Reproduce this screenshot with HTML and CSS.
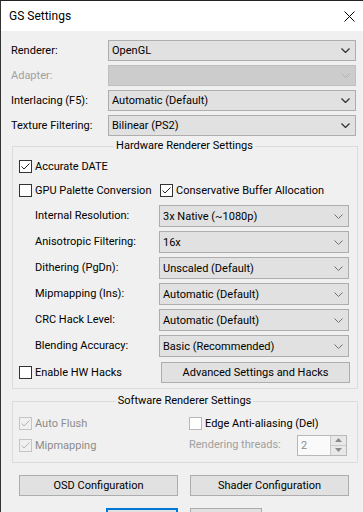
FILE: index.html
```html
<!DOCTYPE html>
<html lang="en">
<head>
    <meta charset="UTF-8">
    <title>GS Settings</title>
    <link rel="stylesheet" href="styles.css">
</head>
<body>
    <div class="window">
        <div class="titlebar">
            <span class="title">GS Settings</span>
            <svg class="close" width="11" height="11" viewBox="0 0 11 11">
                <path d="M0.5 0.5 L10.5 10.5 M10.5 0.5 L0.5 10.5" stroke="#000" stroke-width="1" fill="none"/>
            </svg>
        </div>

        <div class="dialog">
            <!-- Top settings -->
            <div class="form-top">
                <span class="label">Renderer:</span>
                <div class="combo dark"><span>OpenGL</span><svg class="chev" width="9" height="5" viewBox="0 0 9 5"><path d="M0.5 0.5 L4.5 4.5 L8.5 0.5" /></svg></div>

                <span class="label disabled">Adapter:</span>
                <div class="combo off"><span></span><svg class="chev" width="9" height="5" viewBox="0 0 9 5"><path d="M0.5 0.5 L4.5 4.5 L8.5 0.5" /></svg></div>

                <span class="label">Interlacing (F5):</span>
                <div class="combo dark"><span>Automatic (Default)</span><svg class="chev" width="9" height="5" viewBox="0 0 9 5"><path d="M0.5 0.5 L4.5 4.5 L8.5 0.5" /></svg></div>

                <span class="label">Texture Filtering:</span>
                <div class="combo dark"><span>Bilinear (PS2)</span><svg class="chev" width="9" height="5" viewBox="0 0 9 5"><path d="M0.5 0.5 L4.5 4.5 L8.5 0.5" /></svg></div>
            </div>

            <!-- Hardware renderer -->
            <fieldset class="group hw">
                <legend>Hardware Renderer Settings</legend>

                <div class="check-row">
                    <label class="check"><span class="box"><svg width="11" height="11" viewBox="0 0 11 11"><path d="M1.5 5.5 L4 8 L9.5 2.5" /></svg></span>Accurate DATE</label>
                </div>

                <div class="check-row two">
                    <label class="check"><span class="box"></span>GPU Palette Conversion</label>
                    <label class="check"><span class="box"><svg width="11" height="11" viewBox="0 0 11 11"><path d="M1.5 5.5 L4 8 L9.5 2.5" /></svg></span>Conservative Buffer Allocation</label>
                </div>

                <div class="hw-rows">
                    <div class="hw-row">
                        <span class="label">Internal Resolution:</span>
                        <div class="combo"><span>3x Native (~1080p)</span><svg class="chev" width="9" height="5" viewBox="0 0 9 5"><path d="M0.5 0.5 L4.5 4.5 L8.5 0.5" /></svg></div>
                    </div>
                    <div class="hw-row">
                        <span class="label">Anisotropic Filtering:</span>
                        <div class="combo"><span>16x</span><svg class="chev" width="9" height="5" viewBox="0 0 9 5"><path d="M0.5 0.5 L4.5 4.5 L8.5 0.5" /></svg></div>
                    </div>
                    <div class="hw-row">
                        <span class="label">Dithering (PgDn):</span>
                        <div class="combo"><span>Unscaled (Default)</span><svg class="chev" width="9" height="5" viewBox="0 0 9 5"><path d="M0.5 0.5 L4.5 4.5 L8.5 0.5" /></svg></div>
                    </div>
                    <div class="hw-row">
                        <span class="label">Mipmapping (Ins):</span>
                        <div class="combo"><span>Automatic (Default)</span><svg class="chev" width="9" height="5" viewBox="0 0 9 5"><path d="M0.5 0.5 L4.5 4.5 L8.5 0.5" /></svg></div>
                    </div>
                    <div class="hw-row">
                        <span class="label">CRC Hack Level:</span>
                        <div class="combo"><span>Automatic (Default)</span><svg class="chev" width="9" height="5" viewBox="0 0 9 5"><path d="M0.5 0.5 L4.5 4.5 L8.5 0.5" /></svg></div>
                    </div>
                    <div class="hw-row">
                        <span class="label">Blending Accuracy:</span>
                        <div class="combo"><span>Basic (Recommended)</span><svg class="chev" width="9" height="5" viewBox="0 0 9 5"><path d="M0.5 0.5 L4.5 4.5 L8.5 0.5" /></svg></div>
                    </div>
                </div>

                <div class="hacks-row">
                    <label class="check"><span class="box"></span>Enable HW Hacks</label>
                    <button class="btn adv">Advanced Settings and Hacks</button>
                </div>
            </fieldset>

            <!-- Software renderer -->
            <fieldset class="group sw">
                <legend>Software Renderer Settings</legend>
                <div class="sw-grid">
                    <label class="check disabled"><span class="box"><svg width="11" height="11" viewBox="0 0 11 11"><path d="M1.5 5.5 L4 8 L9.5 2.5" /></svg></span>Auto Flush</label>
                    <label class="check"><span class="box light"></span>Edge Anti-aliasing (Del)</label>
                    <label class="check disabled"><span class="box"><svg width="11" height="11" viewBox="0 0 11 11"><path d="M1.5 5.5 L4 8 L9.5 2.5" /></svg></span>Mipmapping</label>
                    <div class="threads">
                        <span class="label disabled">Rendering threads:</span>
                        <div class="spin">
                            <span class="spin-value">2</span>
                            <div class="spin-btns">
                                <span class="spin-btn"><svg width="7" height="4" viewBox="0 0 7 4"><path d="M0 4 L3.5 0 L7 4 Z" /></svg></span>
                                <span class="spin-btn"><svg width="7" height="4" viewBox="0 0 7 4"><path d="M0 0 L3.5 4 L7 0 Z" /></svg></span>
                            </div>
                        </div>
                    </div>
                </div>
            </fieldset>

            <div class="btn-row">
                <button class="btn">OSD Configuration</button>
                <button class="btn">Shader Configuration</button>
            </div>

            <div class="btn-row bottom">
                <button class="btn small primary"></button>
                <button class="btn small"></button>
            </div>
        </div>
    </div>
</body>
</html>
```

FILE: styles.css
```css
body {
    margin: 0;
    overflow: hidden;
    background: #f0f0f0;
    font-family: Roboto, 'Noto Sans', sans-serif;
    font-size: 11px;
    color: #000;
}

.window {
    width: 380px;
    height: 540px;
    border-left: 1px solid #333;
    border-top: 1px solid #222;
    background: #f0f0f0;
}

.titlebar {
    height: 30px;
    background: #fff;
    display: flex;
    align-items: center;
    padding-left: 8px;
}

.title {
    font-size: 12px;
    width: 335px;
}

.dialog {
    padding: 9px 0 0 10px;
}

/* ---------- top form ---------- */

.form-top {
    display: grid;
    grid-template-columns: 97px 248px;
    grid-auto-rows: 21px;
    row-gap: 4px;
    align-items: center;
}

.label {
    white-space: nowrap;
    line-height: 16px;
}

.label.disabled {
    color: #a0a0a0;
}

.combo {
    box-sizing: border-box;
    height: 100%;
    border: 1px solid #adadad;
    background: #e1e1e1;
    display: flex;
    align-items: center;
    justify-content: space-between;
    padding: 0 5px 0 3px;
    white-space: nowrap;
}

.combo .chev path {
    fill: none;
    stroke: #707070;
    stroke-width: 1;
}

.combo.dark .chev path {
    stroke: #333;
    stroke-width: 1.3;
}

.combo.off {
    background: #cccccc;
    border-color: #bfbfbf;
}

.combo.off .chev path {
    stroke: #b0b0b0;
}

/* ---------- group boxes ---------- */

.group {
    box-sizing: border-box;
    width: 346px;
    margin: 2px 0 0 1px;
    padding: 0 7px 6px 6px;
    border: 1px solid #dcdcdc;
    min-inline-size: 0;
}

.group legend {
    margin: 0 auto;
    padding: 0 2px;
    line-height: 16px;
}

.check-row {
    height: 20px;
    display: flex;
    align-items: center;
    margin-top: 2px;
}

.check-row.two {
    margin-top: 4px;
}

.check-row.two .check:first-child {
    width: 141px;
}

.check {
    display: flex;
    align-items: center;
    white-space: nowrap;
}

.box {
    box-sizing: border-box;
    width: 13px;
    height: 13px;
    border: 1px solid #333;
    background: #fff;
    margin-right: 3px;
    display: flex;
    align-items: center;
    justify-content: center;
}

.box svg path {
    fill: none;
    stroke: #222;
    stroke-width: 1;
}

.box.light {
    border-color: #b8b8b8;
}

.check.disabled {
    color: #8c8c8c;
}

.check.disabled .box {
    border-color: #c4c4c4;
    background: #f0f0f0;
}

.check.disabled .box svg path {
    stroke: #b4b4b4;
}

.hw-rows {
    margin-top: 5px;
    display: flex;
    flex-direction: column;
    gap: 4px;
}

.hw-row {
    display: flex;
    align-items: center;
    height: 22px;
    padding-left: 16px;
}

.hw-row .label {
    width: 124px;
}

.hw-row .combo {
    width: 190px;
}

.hacks-row {
    display: flex;
    align-items: center;
    justify-content: space-between;
    margin-top: 5px;
    height: 21px;
}

.btn {
    box-sizing: border-box;
    height: 21px;
    border: 1px solid #adadad;
    background: #e1e1e1;
    font-family: inherit;
    font-size: inherit;
    color: #000;
    padding: 0;
}

.btn.adv {
    width: 189px;
}

.group.hw {
    padding-bottom: 5px;
}

.group.sw {
    margin-top: 4px;
}

.sw-grid {
    display: grid;
    grid-template-columns: 170px 1fr;
    grid-template-rows: 20px 22px;
    row-gap: 1px;
    align-items: center;
    margin-top: 4px;
}

.threads {
    display: flex;
    align-items: center;
}

.threads .label {
    width: 108px;
}

.spin {
    box-sizing: border-box;
    width: 50px;
    height: 21px;
    border: 1px solid #b8b8b8;
    background: #fafafa;
    display: flex;
    justify-content: space-between;
}

.spin-value {
    color: #8c8c8c;
    padding-left: 3px;
    line-height: 19px;
}

.spin-btns {
    display: flex;
    flex-direction: column;
    width: 16px;
}

.spin-btn {
    flex: 1;
    border-left: 1px solid #c8c8c8;
    background: #e8e8e8;
    display: flex;
    align-items: center;
    justify-content: center;
}

.spin-btn + .spin-btn {
    border-top: 1px solid #c8c8c8;
}

.spin-btn svg path {
    fill: #8a8a8a;
}

.btn-row {
    display: flex;
    gap: 12px;
    margin: 12px 0 0 8px;
}

.btn-row .btn {
    width: 159px;
}

.btn-row.bottom {
    margin-left: 95px;
}

.btn-row.bottom .btn {
    width: 72px;
    height: 23px;
}

.btn.primary {
    border: 2px solid #0078d7;
}
```
